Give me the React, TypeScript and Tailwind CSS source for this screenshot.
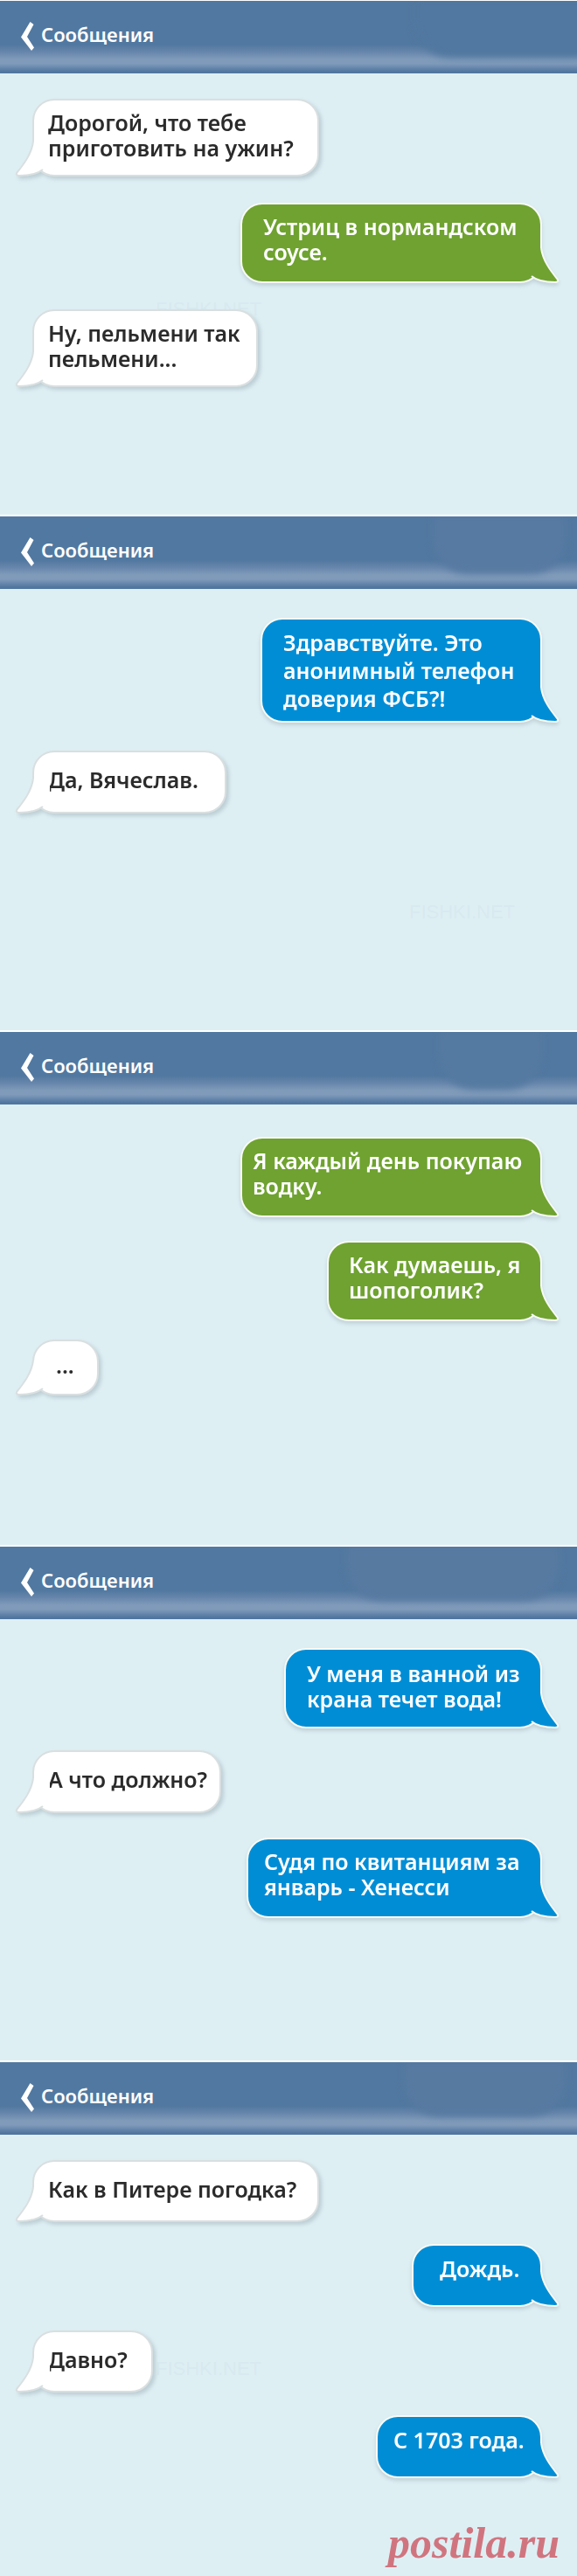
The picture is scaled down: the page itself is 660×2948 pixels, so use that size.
type Tone = 'white' | 'green' | 'blue';

interface Message {
  tone: Tone;
  lines: string[];
  className: string;
}

interface Thread {
  id: number;
  bodyClass: string;
  smudgeClass: string;
  messages: Message[];
  watermarkClass?: string;
}

const threads: Thread[] = [
  {
    id: 1,
    bodyClass: 'min-h-[505px] pt-[29px]',
    smudgeClass: 'left-[72%] w-[34%] h-[65px] bg-[#5178a0]',
    watermarkClass: 'left-[178px] top-[256px]',
    messages: [
      { tone: 'white', lines: ['Дорогой, что тебе', 'приготовить на ужин?'], className: 'w-[328px] pt-[11px] pb-4 pl-4 leading-[29px]' },
      { tone: 'green', lines: ['Устриц в нормандском', 'соусе.'], className: 'mt-[30px] w-[345px] pt-[11px] pb-[19px] pl-6 leading-[29px]' },
      { tone: 'white', lines: ['Ну, пельмени так', 'пельмени...'], className: 'mt-[30px] w-[258px] pt-[11px] pb-4 pl-4 leading-[29px]' },
    ],
  },
  {
    id: 2,
    bodyClass: 'min-h-[505px] pt-[33px]',
    smudgeClass: 'left-[75%] w-[23%] h-[66px] bg-[#577aa2]',
    watermarkClass: 'left-[468px] top-[356px]',
    messages: [
      { tone: 'blue', lines: ['Здравствуйте. Это', 'анонимный телефон', 'доверия ФСБ?!'], className: 'w-[322px] pt-[10px] pb-[10px] pl-6 leading-8' },
      { tone: 'white', lines: ['Да, Вячеслав.'], className: 'mt-[32px] w-[222px] pt-[17px] pb-[22px] pl-4 leading-[29px]' },
    ],
  },
  {
    id: 3,
    bodyClass: 'min-h-[504px] pt-[37px]',
    smudgeClass: 'left-[76%] w-[18%] h-[66px] bg-[#557aa1]',
    messages: [
      { tone: 'green', lines: ['Я каждый день покупаю', 'водку.'], className: 'w-[345px] pt-[11px] pb-[19px] pl-3 leading-[29px]' },
      { tone: 'green', lines: ['Как думаешь, я', 'шопоголик?'], className: 'mt-[27px] w-[246px] pt-[11px] pb-[19px] pl-[23px] leading-[29px]' },
      { tone: 'white', lines: ['...'], className: 'mt-[21px] w-[76px] pt-[13px] pb-[18px] pl-[25px] leading-[29px]' },
    ],
  },
  {
    id: 4,
    bodyClass: 'min-h-[505px] pt-[33px]',
    smudgeClass: 'left-[60%] w-[37%] h-[62px] bg-[#577aa1]',
    messages: [
      { tone: 'blue', lines: ['У меня в ванной из', 'крана течет вода!'], className: 'w-[295px] pt-[13px] pb-[17px] pl-6 leading-[29px]' },
      { tone: 'white', lines: ['А что должно?'], className: 'mt-[25px] w-[216px] pt-[17px] pb-[22px] pl-4 leading-[29px]' },
      { tone: 'blue', lines: ['Судя по квитанциям за', 'январь - Хенесси'], className: 'mt-[28px] w-[338px] pt-[11px] pb-[19px] pl-[18px] leading-[29px]' },
    ],
  },
  {
    id: 5,
    bodyClass: 'min-h-[505px] pt-[29px]',
    smudgeClass: 'left-[70%] w-[28%] h-[62px] bg-[#577aa1]',
    watermarkClass: 'left-[178px] top-[254px]',
    messages: [
      { tone: 'white', lines: ['Как в Питере погодка?'], className: 'w-[328px] pt-[17px] pb-[21px] pl-4 leading-[29px]' },
      { tone: 'blue', lines: ['Дождь.'], className: 'mt-[25px] w-[149px] pt-[12px] pb-[27px] pl-[30px] leading-[29px]' },
      { tone: 'white', lines: ['Давно?'], className: 'mt-[27px] w-[138px] pt-[17px] pb-[21px] pl-4 leading-[29px]' },
      { tone: 'blue', lines: ['С 1703 года.'], className: 'mt-[26px] w-[190px] pt-[12px] pb-[27px] pl-[18px] leading-[29px]' },
    ],
  },
];

const boxStyles: Record<Tone, string> = {
  white: 'bg-white border-[#d9dfe0] text-[#2b2b2b]',
  green: 'bg-[#6fa230] border-[#f7faf4] text-white',
  blue: 'bg-[#018dd6] border-[#f7faf4] text-white',
};

const tailStyles: Record<Tone, string> = {
  white: 'fill-white stroke-[#d9dfe0] -left-5',
  green: 'fill-[#6fa230] stroke-[#f7faf4] -right-5 -scale-x-100',
  blue: 'fill-[#018dd6] stroke-[#f7faf4] -right-5 -scale-x-100',
};

function Tail({ tone }: { tone: Tone }) {
  return (
    <svg className={`absolute bottom-0 ${tailStyles[tone]}`} width="60" height="64" viewBox="0 0 60 64" aria-hidden="true">
      <path d="M21 24 C19 38 11 49 2 60 Q1 63 5 63 C16 63 26 61 32 56 L40 50 L40 24 Z" stroke="none" />
      <path d="M21 24 C19 38 11 49 2 60 Q1 63 5 63 C16 63 26 61 32 56" fill="none" strokeWidth="2" strokeLinejoin="round" />
    </svg>
  );
}

function Bubble({ message }: { message: Message }) {
  const { tone, lines, className } = message;
  const side =
    tone === 'white'
      ? 'self-start drop-shadow-[3px_3px_2px_rgba(90,110,120,0.25)]'
      : 'self-end drop-shadow-[0px_3px_2px_rgba(90,110,120,0.22)]';

  return (
    <li className={`relative flex ${side}`}>
      <p className={`rounded-[25px] border-2 whitespace-nowrap ${boxStyles[tone]} ${className}`}>
        {lines.map((line) => (
          <span key={line} className="block">
            {line}
          </span>
        ))}
      </p>
      <Tail tone={tone} />
    </li>
  );
}

function ThreadHeader({ smudgeClass }: { smudgeClass: string }) {
  return (
    <header className="relative flex h-[83px] items-start overflow-hidden bg-[linear-gradient(to_bottom,#5178a0_0px,#5178a0_50px,#6685ab_58px,#809bba_67px,#7f9aba_72px,#50769f_81px)] pt-6 pl-6">
      <div className={`absolute top-0 rounded-b-[40px] blur-[4px] ${smudgeClass}`} />
      <button type="button" className="relative flex items-start gap-2 text-[22px] leading-7 font-semibold text-white">
        <svg width="15" height="33" viewBox="0 0 15 33" className="fill-white" aria-hidden="true">
          <path d="M10.500 0 L14.500 3 L7 17 L15 29.500 L12 33 L0 17.500 Z" />
        </svg>
        Сообщения
      </button>
    </header>
  );
}

export default function App() {
  return (
    <main className="bg-[#deeff4] font-['Noto_Sans','Open_Sans',sans-serif] text-[25px] font-semibold">
      {threads.map((thread) => (
        <section key={thread.id} className="border-t-2 border-white first:border-t">
          <ThreadHeader smudgeClass={thread.smudgeClass} />
          <div className={`relative flex flex-col ${thread.bodyClass}`}>
            {thread.watermarkClass && (
              <span className={`absolute font-['Liberation_Sans',sans-serif] text-[22px] leading-7 font-normal text-[#d8eaef] ${thread.watermarkClass}`}>
                FISHKI.NET
              </span>
            )}
            <ul className="flex flex-col pr-10 pl-[37px]">
              {thread.messages.map((message) => (
                <Bubble key={message.lines[0]} message={message} />
              ))}
            </ul>
            {thread.id === 5 && (
              <a
                href="#"
                className="mt-auto self-end pr-5 pb-2 font-['Liberation_Serif',serif] text-[50px] leading-[60px] font-bold text-[#d0757f] italic"
              >
                postila.ru
              </a>
            )}
          </div>
        </section>
      ))}
    </main>
  );
}
